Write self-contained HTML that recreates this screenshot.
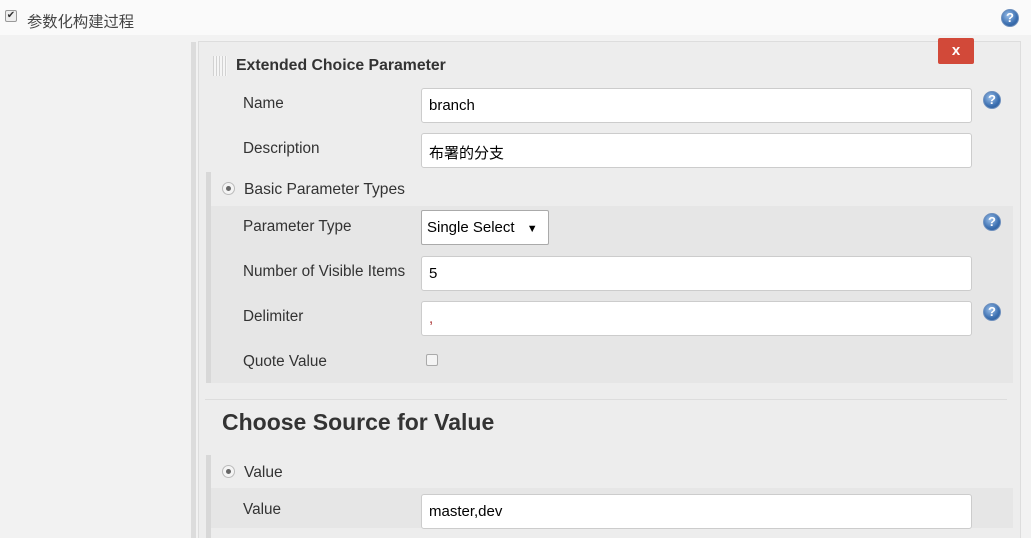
<!DOCTYPE html>
<html><head><meta charset="utf-8"><style>
body{margin:0;width:1031px;height:538px;overflow:hidden;background:#f2f2f2;font-family:"Liberation Sans","Noto Sans CJK SC",sans-serif;font-size:15px;color:#333;position:relative}
.a{position:absolute}
.inp{position:absolute;background:#fff;border:1px solid #ccc;border-radius:3px;box-sizing:border-box;height:35px;padding:8px 7px;font-size:15px;color:#000}
.lbl{position:absolute;font-size:15.3px;color:#333}
.help{position:absolute;width:18px;height:18px;border-radius:50%;background:radial-gradient(circle at 40% 35%,#9cc0ea,#3b6fb0 60%,#2a568f);border:1px solid #6d8fbd;box-sizing:border-box;color:#fff;font:bold 13px/16px "Liberation Sans",sans-serif;text-align:center}
.radio{position:absolute;width:13px;height:13px;border-radius:50%;border:1px solid #bbb;background:#f4f4f4;box-sizing:border-box}
.radio:after{content:"";position:absolute;left:3px;top:3px;width:5px;height:5px;border-radius:50%;background:#666}
</style></head><body>
<div class="a" style="left:0;top:0;width:1031px;height:35px;background:#fafafa"></div>
<div class="a" style="left:5px;top:10px;width:12px;height:12px;border:1px solid #999;border-radius:2px;background:#eee;box-sizing:border-box;font-size:10px;line-height:10px;text-align:center;color:#333">✔</div>
<div class="lbl" style="left:27px;top:10px;color:#444">参数化构建过程</div>
<div class="help" style="left:1001px;top:9px">?</div>

<div class="a" style="left:191px;top:42px;width:5px;height:496px;background:#dcdcdc"></div>
<div class="a" style="left:198px;top:41px;width:823px;height:497px;background:#ededed;border:1px solid #ddd;border-bottom:none;box-sizing:border-box"></div>
<div class="a" style="left:938px;top:38px;width:36px;height:26px;background:#d24939;border-radius:2px;color:#fff;font:bold 15px/26px 'Liberation Sans',sans-serif;text-align:center">x</div>
<div class="a" style="left:213px;top:56px;width:14px;height:20px;background:repeating-linear-gradient(90deg,#ccc 0 1px,transparent 1px 3px),#f7f7f7;opacity:.8"></div>
<div class="lbl" style="left:236px;top:57px;font-weight:bold;font-size:15.8px;color:#333">Extended Choice Parameter</div>

<div class="lbl" style="left:243px;top:95px">Name</div>
<div class="inp" style="left:421px;top:88px;width:551px">branch</div>
<div class="help" style="left:983px;top:91px">?</div>
<div class="lbl" style="left:243px;top:140px">Description</div>
<div class="inp" style="left:421px;top:133px;width:551px">布署的分支</div>

<div class="a" style="left:206px;top:172px;width:5px;height:211px;background:#d8d8d8"></div>
<div class="a" style="left:211px;top:206px;width:802px;height:177px;background:#e6e6e6"></div>
<div class="radio" style="left:222px;top:182px"></div>
<div class="lbl" style="left:244px;top:181px;font-size:15.6px">Basic Parameter Types</div>
<div class="lbl" style="left:243px;top:218px">Parameter Type</div>
<div class="inp" style="left:421px;top:210px;width:128px;border-radius:2px;border-color:#aaa;padding-left:5px">Single Select <span style="font-size:11px;margin-left:8px">▼</span></div>
<div class="help" style="left:983px;top:213px">?</div>
<div class="lbl" style="left:243px;top:263px">Number of Visible Items</div>
<div class="inp" style="left:421px;top:256px;width:551px">5</div>
<div class="lbl" style="left:243px;top:308px">Delimiter</div>
<div class="inp" style="left:421px;top:301px;width:551px;color:#a33">,</div>
<div class="help" style="left:983px;top:303px">?</div>
<div class="lbl" style="left:243px;top:353px">Quote Value</div>
<div class="a" style="left:426px;top:354px;width:12px;height:12px;border:1px solid #aaa;border-radius:2px;background:#f4f4f4;box-sizing:border-box"></div>

<div class="a" style="left:205px;top:399px;width:802px;height:1px;background:#ddd"></div>
<div class="lbl" style="left:222px;top:409px;font-weight:bold;font-size:23px;color:#333">Choose Source for Value</div>

<div class="a" style="left:206px;top:455px;width:5px;height:83px;background:#d8d8d8"></div>
<div class="a" style="left:211px;top:488px;width:802px;height:40px;background:#e6e6e6"></div>
<div class="radio" style="left:222px;top:465px"></div>
<div class="lbl" style="left:244px;top:464px;font-size:15.6px">Value</div>
<div class="lbl" style="left:243px;top:501px">Value</div>
<div class="inp" style="left:421px;top:494px;width:551px">master,dev</div>
</body></html>
